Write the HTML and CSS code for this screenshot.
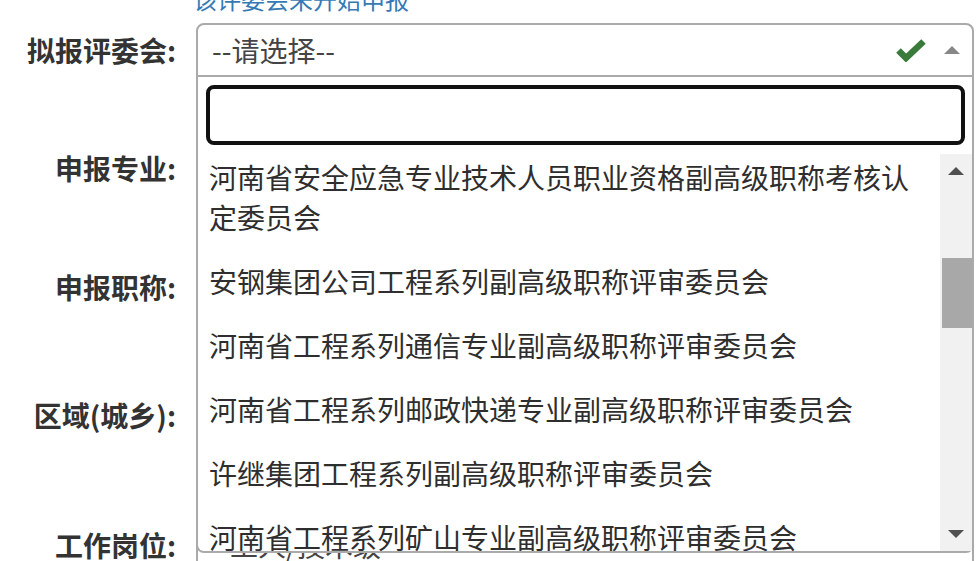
FILE: index.html
```html
<!DOCTYPE html>
<html lang="zh-CN">
<head>
<meta charset="utf-8">
<title>申报</title>
<link rel="stylesheet" href="styles.css">
</head>
<body>
<div class="page">
  <div class="notice"><a class="notice-link" href="#">该评委会未开始申报</a></div>

  <div class="row row-first">
    <label class="label">拟报评委会:</label>
    <div class="field">
      <div class="select select-open">
        <span class="select-text">--请选择--</span>
        <svg class="check" width="30" height="24" viewBox="0 0 30 24" aria-hidden="true">
          <polyline points="2.5,12.5 10,20 27.5,3.5" fill="none" stroke="#3a7a3a" stroke-width="6.5" stroke-linejoin="miter"/>
        </svg>
        <span class="caret-up"></span>
      </div>
      <div class="dropdown">
        <div class="search-wrap"><input class="search" type="text"></div>
        <div class="results">
          <div class="viewport">
            <ul class="options">
              <li class="option">河南省安全应急专业技术人员职业资格副高级职称考核认定委员会</li>
              <li class="option">安钢集团公司工程系列副高级职称评审委员会</li>
              <li class="option">河南省工程系列通信专业副高级职称评审委员会</li>
              <li class="option">河南省工程系列邮政快递专业副高级职称评审委员会</li>
              <li class="option">许继集团工程系列副高级职称评审委员会</li>
              <li class="option">河南省工程系列矿山专业副高级职称评审委员会</li>
            </ul>
          </div>
          <div class="scrollbar">
            <div class="sb-btn"><span class="sb-up"></span></div>
            <div class="sb-track"><div class="sb-thumb"></div></div>
            <div class="sb-btn"><span class="sb-down"></span></div>
          </div>
        </div>
      </div>
    </div>
  </div>

  <div class="row row-2">
    <label class="label">申报专业:</label>
    <div class="field"><div class="select"></div></div>
  </div>

  <div class="row row-3">
    <label class="label">申报职称:</label>
    <div class="field"><div class="select"></div></div>
  </div>

  <div class="row row-4">
    <label class="label">区域(城乡):</label>
    <div class="field"><div class="select"></div></div>
  </div>

  <div class="row row-5">
    <label class="label">工作岗位:</label>
    <div class="field"><div class="select"><span class="select-text select-text-low">工人/技术级</span></div></div>
  </div>
</div>
</body>
</html>
```

FILE: styles.css
```css
* { box-sizing: border-box; }

html, body {
  margin: 0;
  padding: 0;
  background: #ffffff;
  overflow: hidden;
}

body {
  font-family: "Noto Sans CJK SC", "Noto Sans", sans-serif;
  color: #333333;
  width: 977px;
  height: 561px;
}

.page {
  margin-top: -18px;
  width: 974px;
}

.notice {
  padding-left: 193px;
  height: 34px;
  line-height: 34px;
  font-size: 24px;
}

.notice-link {
  color: #3579b5;
  text-decoration: none;
}

.row {
  display: flex;
  align-items: center;
  height: 54px;
}

.row-first { margin-top: 7px; position: relative; z-index: 5; }
.row-2 { margin-top: 64px; }
.row-3 { margin-top: 65px; }
.row-4 { margin-top: 74px; }
.row-5 { margin-top: 76px; }

.label {
  width: 180px;
  flex: none;
  text-align: right;
  padding-right: 4px;
  font-size: 28px;
  font-weight: 700;
  color: #333333;
  white-space: nowrap;
}

.field {
  margin-left: 16px;
  flex: 1;
  height: 54px;
  position: relative;
}

.select {
  height: 54px;
  border: 2px solid #aaaaaa;
  border-radius: 8px;
  display: flex;
  align-items: center;
  padding-left: 14px;
  padding-right: 12px;
  background: #ffffff;
}

.select-open {
  border-radius: 8px 8px 0 0;
}

.select-text {
  flex: 1;
  font-size: 28px;
  color: #444444;
  line-height: 40px;
}

.select-text-low {
  padding-left: 18px;
}

.check {
  flex: none;
  margin-right: 18px;
}

.caret-up {
  flex: none;
  width: 0;
  height: 0;
  border-left: 8px solid transparent;
  border-right: 8px solid transparent;
  border-bottom: 8px solid #888888;
}

.dropdown {
  position: absolute;
  top: 100%;
  left: 0;
  right: 0;
  height: 476px;
  border: 2px solid #aaaaaa;
  border-top: none;
  border-radius: 0 0 8px 8px;
  background: #ffffff;
  display: flex;
  flex-direction: column;
  z-index: 10;
}

.search-wrap {
  padding: 8px 7px 9px 8px;
  flex: none;
}

.search {
  display: block;
  width: 100%;
  height: 60px;
  border: 4px solid #111111;
  border-radius: 8px;
  outline: none;
  font-size: 28px;
  padding: 0 10px;
  font-family: inherit;
  background: #ffffff;
}

.results {
  flex: 1;
  display: flex;
  min-height: 0;
}

.viewport {
  flex: 1;
  overflow: hidden;
}

.options {
  list-style: none;
  margin: -9px 0 0 0;
  padding: 0;
}

.option {
  padding: 12px 12px 12px 11px;
  font-size: 28px;
  line-height: 40px;
  color: #2e2e2e;
}

.scrollbar {
  width: 32px;
  flex: none;
  background: #f1f1f1;
  display: flex;
  flex-direction: column;
}

.sb-btn {
  height: 34px;
  flex: none;
  display: flex;
  align-items: center;
  justify-content: center;
}

.sb-up {
  width: 0;
  height: 0;
  border-left: 8px solid transparent;
  border-right: 8px solid transparent;
  border-bottom: 8px solid #505050;
}

.sb-down {
  width: 0;
  height: 0;
  border-left: 8px solid transparent;
  border-right: 8px solid transparent;
  border-top: 8px solid #505050;
}

.sb-track {
  flex: 1;
}

.sb-thumb {
  margin-top: 70px;
  margin-left: 2px;
  width: 30px;
  height: 70px;
  background: #a8a8a8;
}
```
